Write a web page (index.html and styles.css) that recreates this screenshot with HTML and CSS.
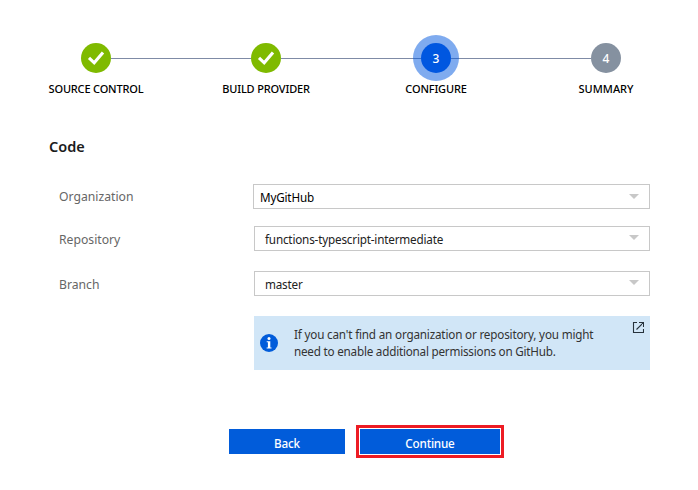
FILE: index.html
```
<!DOCTYPE html>
<html lang="en">
<head>
<meta charset="utf-8">
<title>Configure deployment</title>
<link rel="stylesheet" href="styles.css">
</head>
<body>
<main class="wizard">
  <ol class="steps">
    <li class="step done">
      <span class="marker"><svg width="30" height="30" viewBox="0 0 30 30"><path d="M8 14.8l5.2 5L22 9.4"/></svg></span>
      <span class="step-label">SOURCE CONTROL</span>
    </li>
    <li class="step done">
      <span class="marker"><svg width="30" height="30" viewBox="0 0 30 30"><path d="M8 14.8l5.2 5L22 9.4"/></svg></span>
      <span class="step-label">BUILD PROVIDER</span>
    </li>
    <li class="step current">
      <span class="marker">3</span>
      <span class="step-label">CONFIGURE</span>
    </li>
    <li class="step">
      <span class="marker">4</span>
      <span class="step-label">SUMMARY</span>
    </li>
  </ol>

  <section class="form">
    <h2>Code</h2>
    <div class="row organization">
      <span class="label">Organization</span>
      <div class="select"><span>MyGitHub</span><svg class="caret" width="10" height="5" viewBox="0 0 10 5"><path d="M0 0h10L5 5z"/></svg></div>
    </div>
    <div class="row repository">
      <span class="label">Repository</span>
      <div class="select"><span>functions-typescript-intermediate</span><svg class="caret" width="10" height="5" viewBox="0 0 10 5"><path d="M0 0h10L5 5z"/></svg></div>
    </div>
    <div class="row branch">
      <span class="label">Branch</span>
      <div class="select"><span>master</span><svg class="caret" width="10" height="5" viewBox="0 0 10 5"><path d="M0 0h10L5 5z"/></svg></div>
    </div>
    <div class="info">
      <svg class="info-icon" width="18" height="18" viewBox="0 0 18 18"><circle cx="9" cy="9" r="9" fill="#015cda"/><circle cx="9" cy="4.4" r="1.5" fill="#fff"/><path d="M6.7 7.2h3.6v6.3h1.2v1H6.6v-1h1.3V8.2H6.7z" fill="#fff"/></svg>
      <p>If you can't find an organization or repository, you might<br><span class="second-line">need to enable additional permissions on GitHub.</span></p>
      <svg class="external" width="12" height="12" viewBox="0 0 12 12"><path d="M5 .5H1.5v10h10V7M7 .5h4.5V5M11.2.8L4.5 7.5"/></svg>
    </div>
  </section>

  <div class="actions">
    <button class="back">Back</button>
    <div class="highlight"><button class="continue">Continue</button></div>
  </div>
</main>
</body>
</html>
```
FILE: styles.css
```
* { box-sizing: border-box; }
body {
  margin: 0;
  background: #fff;
  font-family: "Noto Sans", "Open Sans", sans-serif;
  font-size: 12px;
  color: #000;
}
.wizard { width: 698px; height: 490px; overflow: hidden; }

.steps {
  display: grid;
  grid-template-columns: repeat(4, 170px);
  margin: 0;
  padding: 35px 0 0 11px;
  list-style: none;
}
.step {
  position: relative;
  display: flex;
  flex-direction: column;
  align-items: center;
}
.step:not(:last-child)::after {
  content: "";
  position: absolute;
  top: 23px;
  left: 100px;
  width: 140px;
  height: 1px;
  background: #7f8ba6;
}
.marker {
  position: relative;
  z-index: 1;
  display: flex;
  align-items: center;
  justify-content: center;
  width: 30px;
  height: 30px;
  margin: 8px 0;
  border-radius: 50%;
  background: #8591a0;
  color: #fff;
  font-size: 12px;
  font-weight: 500;
  line-height: 20px;
  padding-top: 2px;
}
.done .marker { padding: 0; background: #7fba00; }
.done path { fill: none; stroke: #fff; stroke-width: 3.1; }
.current .marker {
  background: #0057e0;
  box-shadow: 0 0 0 8px rgba(0, 87, 224, .5);
}
.step-label {
  height: 16px;
  font-size: 11px;
  font-weight: 500;
  line-height: 16px;
  letter-spacing: -.17px;
  white-space: nowrap;
}
.step:last-child .step-label { letter-spacing: 0; }

.form { padding: 39px 48px 0 49px; }
h2 {
  margin: 0;
  padding-bottom: 28px;
  font-size: 14.5px;
  font-weight: 600;
  line-height: 20px;
  color: #1b1b1b;
}
.row { display: flex; align-items: center; }
.label {
  flex: none;
  width: 205px;
  padding: 2px 0 0 10px;
  font-size: 12.2px;
  line-height: 18px;
  color: #666;
}
.select {
  display: flex;
  flex: 1;
  align-items: center;
  justify-content: space-between;
  height: 25px;
  padding: 0 10px;
  border: 1px solid #c8c8c8;
  color: #222;
  font-size: 11.7px;
  letter-spacing: -.18px;
  white-space: nowrap;
}
.caret { fill: #c8c8c8; margin-bottom: 3px; }
.organization .label { width: 204px; padding-top: 0; }
.organization .select { padding-left: 6px; color: #000; }
.organization .caret { margin-bottom: 0; }
.repository { margin-top: 17px; }
.branch { margin-top: 20px; }

.info {
  display: flex;
  align-items: flex-start;
  height: 54px;
  margin: 20px 0 0 205px;
  padding: 0 6px;
  background: #d1e6f7;
  color: #333;
}
.info-icon { flex: none; margin-top: 18px; }
.info p {
  flex: 1;
  margin: 10px 0 0 16px;
  font-size: 11.7px;
  line-height: 17px;
  letter-spacing: -.18px;
  white-space: nowrap;
}
.second-line { letter-spacing: -.22px; }
.external { flex: none; margin-top: 6px; fill: none; stroke: #26323c; stroke-width: 1.1; }

.actions { display: flex; padding: 55px 0 0 229px; }
button {
  height: 25px;
  padding: 3px 0 0;
  border: 0;
  background: #015cda;
  color: #fff;
  font: 500 11.7px/20px "Noto Sans", sans-serif;
  letter-spacing: -.2px;
}
.back { width: 116px; margin-top: 4px; }
.highlight {
  width: 148px;
  height: 33px;
  margin-left: 11px;
  padding: 1px;
  border: 3px solid #ed1c24;
}
.continue { display: block; width: 140px; }
```
